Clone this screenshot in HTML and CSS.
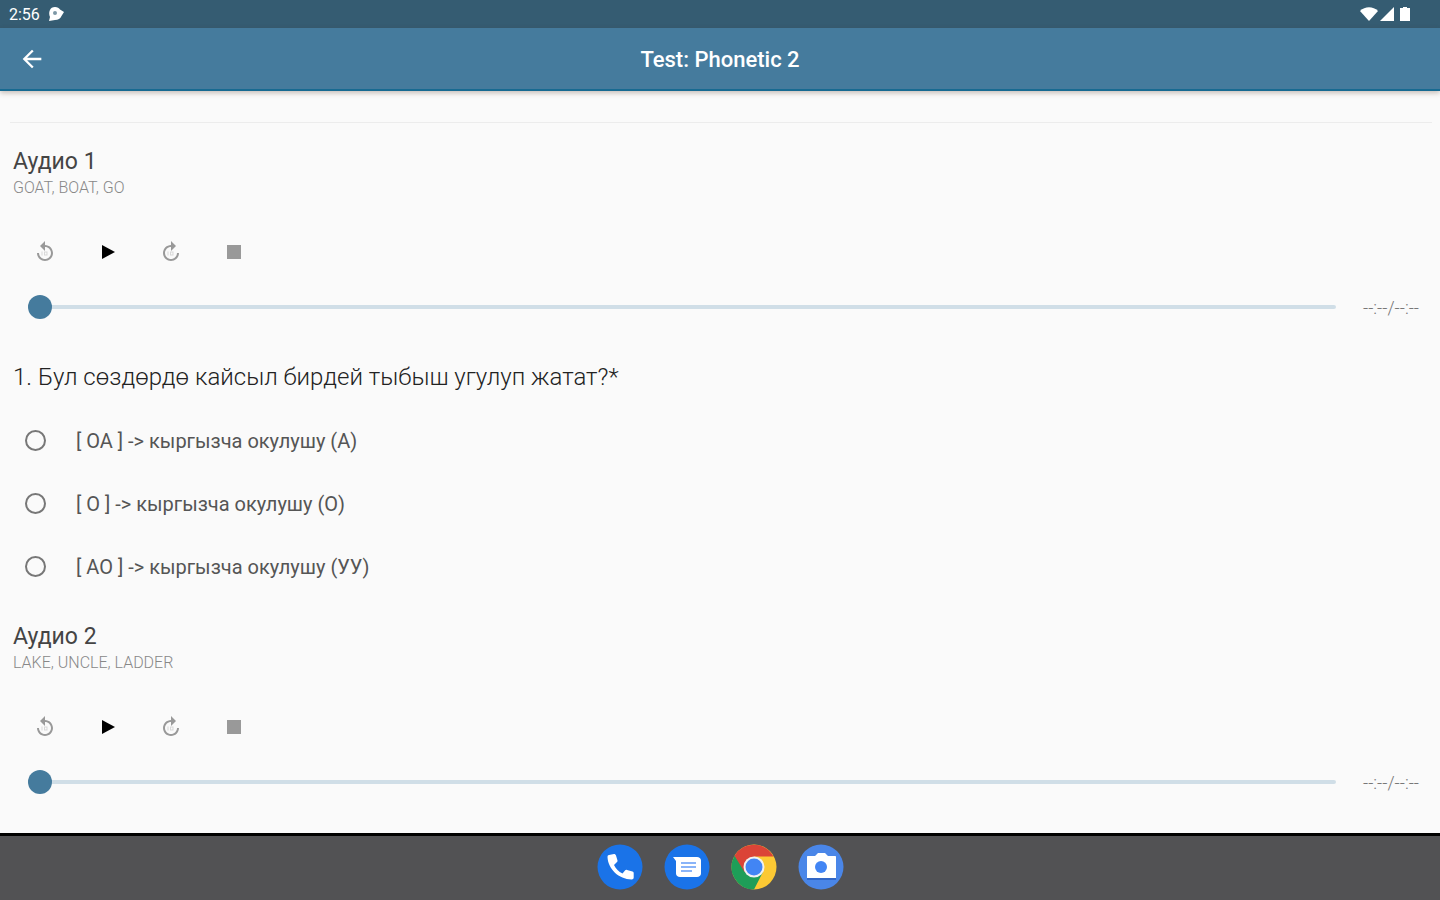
FILE: index.html
```
<!DOCTYPE html>
<html lang="ky">
<head>
    <meta charset="utf-8">
    <title>Test: Phonetic 2</title>
    <link rel="stylesheet" href="styles.css">
</head>
<body>
<svg class="sprite" aria-hidden="true">
    <symbol id="replay" viewBox="0 0 24 24">
        <path d="M12 5V1L7 6l5 5V7c3.300 0 6 2.700 6 6s-2.700 6-6 6-6-2.700-6-6H4c0 4.400 3.600 8 8 8s8-3.600 8-8-3.600-8-8-8z"/>
        <path d="M8.500 11.500h1v4h-1zM11 11.500h3.500v4H11zM12 12.500v2h1.500v-2z" opacity=".35"/>
    </symbol>
    <symbol id="forward" viewBox="0 0 24 24">
        <path d="M12 5V1l5 5-5 5V7c-3.300 0-6 2.700-6 6s2.700 6 6 6 6-2.700 6-6h2c0 4.400-3.600 8-8 8s-8-3.600-8-8 3.600-8 8-8z"/>
        <path d="M8.500 11.500h1v4h-1zM11 11.500h3.500v4H11zM12 12.500v2h1.500v-2z" opacity=".35"/>
    </symbol>
    <symbol id="play" viewBox="0 0 24 24"><path d="M6 5v14l13-7z"/></symbol>
    <symbol id="stop" viewBox="0 0 24 24"><path d="M5 5h14v14H5z"/></symbol>
</svg>
<div class="statusBar">
    <span class="clock">2:56</span>
    <svg class="notice" width="18" height="16" viewBox="0 0 18 16">
        <path fill="#fff" d="M8 1c2.500 0 4 1 5 2.500l4 2.500-2.500 4C13.500 12.500 11 14 8 14l-6 1 1-4C1 6 3 1 8 1z"/>
        <circle cx="8" cy="7" r="2" fill="#7d98a6"/>
    </svg>
    <div class="statusIcons">
        <svg width="18" height="16" viewBox="0 0 18 16"><path fill="#fff" d="M0 5C5 0 13 0 18 5L9 15z"/></svg>
        <svg width="14" height="16" viewBox="0 0 14 16"><path fill="#fff" d="M14 1v14H0z"/></svg>
        <svg class="battery" width="10" height="16" viewBox="0 0 10 16"><path fill="#fff" d="M3 1h4v1h3v13H0V2h3z"/></svg>
    </div>
</div>
<header class="appBar">
    <button class="back" type="button" aria-label="Back">
        <svg width="28" height="28" viewBox="0 0 24 24"><path fill="#fff" d="M20 11H7.800l5.600-5.600L12 4l-8 8 8 8 1.400-1.400L7.800 13H20z"/></svg>
    </button>
    <h1>Test: Phonetic 2</h1>
</header>
<main class="content">
    <hr>
    <section class="audio">
        <h2>Аудио 1</h2>
        <p class="words">GOAT, BOAT, GO</p>
        <div class="controls">
            <button type="button" aria-label="Replay"><svg><use href="#replay"/></svg></button>
            <button class="play" type="button" aria-label="Play"><svg><use href="#play"/></svg></button>
            <button type="button" aria-label="Forward"><svg><use href="#forward"/></svg></button>
            <button type="button" aria-label="Stop"><svg><use href="#stop"/></svg></button>
        </div>
        <div class="progress">
            <input type="range" min="0" max="100" value="0" aria-label="Аудио 1">
            <span>--:--/--:--</span>
        </div>
    </section>
    <fieldset class="question">
        <legend>1. Бул сөздөрдө кайсыл бирдей тыбыш угулуп жатат?*</legend>
        <label><input type="radio" name="q1"><span>[ OA ] -&gt; кыргызча окулушу (А)</span></label>
        <label><input type="radio" name="q1"><span>[ O ] -&gt; кыргызча окулушу (О)</span></label>
        <label><input type="radio" name="q1"><span>[ AO ] -&gt; кыргызча окулушу (УУ)</span></label>
    </fieldset>
    <section class="audio">
        <h2>Аудио 2</h2>
        <p class="words">LAKE, UNCLE, LADDER</p>
        <div class="controls">
            <button type="button" aria-label="Replay"><svg><use href="#replay"/></svg></button>
            <button class="play" type="button" aria-label="Play"><svg><use href="#play"/></svg></button>
            <button type="button" aria-label="Forward"><svg><use href="#forward"/></svg></button>
            <button type="button" aria-label="Stop"><svg><use href="#stop"/></svg></button>
        </div>
        <div class="progress">
            <input type="range" min="0" max="100" value="0" aria-label="Аудио 2">
            <span>--:--/--:--</span>
        </div>
    </section>
</main>
<nav class="dock">
    <button type="button" aria-label="Phone">
        <svg viewBox="0 0 46 46">
            <circle cx="23" cy="23" r="22.500" fill="#1a73e8"/>
            <path fill="#fff" d="M12 11l5-1c1 0 1.500.5 2 1.500l1.500 5c0 1-.2 1.500-1 2L17 21c2 4 4.500 6.500 8.500 8.500l2.500-3c.6-.6 1.300-.8 2-.5l5.500 1.500c.8.3 1.200.8 1.200 1.500v4.500c0 1.200-.8 1.900-2 1.900C22 35.500 11 25 10.500 13c0-1.200.5-1.800 1.500-2z"/>
        </svg>
    </button>
    <button type="button" aria-label="Messages">
        <svg viewBox="0 0 46 46">
            <circle cx="23" cy="23" r="22.500" fill="#1a73e8"/>
            <path fill="#fff" d="M9 13h24c2.200 0 4 1.500 4 3.500v13c0 2-1.800 3.500-4 3.500H16c-2.200 0-4-1.500-4-3.500V17z"/>
            <path stroke="#8ab4f8" stroke-width="2" d="M17 19h15M17 23h15M17 27h11"/>
        </svg>
    </button>
    <button type="button" aria-label="Chrome">
        <svg viewBox="0 0 46 46">
            <circle cx="23" cy="23" r="22.500" fill="#fcc934"/>
            <path fill="#1e9e58" d="M3.500 11.750A22.500 22.500 0 0 0 23 45.500L32 28 23 23z"/>
            <path fill="#db4437" d="M3.500 11.750A22.500 22.500 0 0 1 42.500 12.500H23v10.500l-9.500 5z"/>
            <circle cx="23" cy="23" r="10.500" fill="#f1f1f1"/>
            <circle cx="23" cy="23" r="8.500" fill="#4285f4"/>
        </svg>
    </button>
    <button type="button" aria-label="Camera">
        <svg viewBox="0 0 46 46">
            <circle cx="23" cy="23" r="22.500" fill="#4a86e8"/>
            <path fill="#3367c6" d="M9 33h29v3H9z"/>
            <path fill="#fff" d="M10 12h7l3-3h7l3 3h7c.6 0 1 .4 1 1v21H9V13c0-.6.4-1 1-1z"/>
            <circle cx="23" cy="23" r="6" fill="#4285f4"/>
        </svg>
    </button>
</nav>
</body>
</html>
```
FILE: styles.css
```
*{
    box-sizing: border-box;
}
body{
    margin: 0;
    height: 100vh;
    display: flex;
    flex-direction: column;
    background: #fafafa;
    color: #444;
    font-family: Roboto, "Noto Sans", sans-serif;
}
button{
    border: 0;
    padding: 0;
    background: none;
    cursor: pointer;
}
svg{
    display: block;
}
.sprite{
    display: none;
}
.statusBar{
    flex: none;
    height: 28px;
    padding: 0 30px 0 9px;
    display: flex;
    align-items: center;
    gap: 7px;
    background: #355c72;
    color: #fff;
    font-size: 16px;
}
.statusIcons{
    margin-left: auto;
    display: flex;
    gap: 2px;
}
.battery{
    margin-left: 4px;
}
.appBar{
    flex: none;
    height: 63px;
    padding: 0 18px;
    display: grid;
    grid-template-columns: 28px 1fr 28px;
    align-items: center;
    background: #457b9d;
    border-bottom: 2px solid #176a91;
    box-shadow: 0 2px 5px rgba(80,50,30,0.3);
    color: #fff;
}
.appBar h1{
    margin: 0;
    padding-top: 2px;
    text-align: center;
    font-size: 22px;
    font-weight: 500;
}
.content{
    flex: 1;
    min-height: 0;
    overflow: hidden;
}
hr{
    margin: 31px 8px 0 10px;
    border: 0;
    border-top: 1px solid #ececec;
}
.audio{
    padding: 25px 0 0 13px;
}
.audio h2{
    margin: 0;
    font-size: 23px;
    font-weight: 400;
    line-height: 28px;
}
.words{
    margin: 0;
    color: #888;
    font-size: 16px;
    font-weight: 300;
    line-height: 24px;
}
.controls{
    margin-top: 20px;
    display: flex;
}
.controls button{
    width: 63px;
    height: 64px;
    display: flex;
    align-items: center;
    justify-content: center;
    color: #999;
}
.controls .play{
    color: #000;
}
.controls svg{
    width: 24px;
    height: 24px;
    fill: currentColor;
}
.progress{
    height: 46px;
    padding: 0 21px 0 15px;
    display: flex;
    align-items: center;
    gap: 27px;
    color: #777;
    font-size: 18px;
    font-weight: 300;
}
.progress input{
    flex: 1;
    min-width: 0;
    height: 24px;
    margin: 0;
    background: none;
    appearance: none;
}
.progress input::-webkit-slider-runnable-track{
    height: 4px;
    border-radius: 2px;
    background: #d0dee7;
}
.progress input::-webkit-slider-thumb{
    width: 24px;
    height: 24px;
    margin-top: -10px;
    border-radius: 50%;
    background: #457b9d;
    appearance: none;
}
.question{
    margin: 32px 0 0;
    padding: 0 13px;
    border: 0;
}
.question legend{
    margin-bottom: 17px;
    padding: 0;
    font-size: 24px;
    font-weight: 300;
    line-height: 30px;
    color: #222;
}
.question label{
    height: 63px;
    padding-left: 12px;
    display: flex;
    align-items: center;
    gap: 30px;
    color: #555;
    font-size: 20px;
}
.question input{
    width: 21px;
    height: 21px;
    margin: 0;
    border: 2px solid #777;
    border-radius: 50%;
    appearance: none;
}
.question input:checked{
    border: 6px solid #457b9d;
}
.dock{
    flex: none;
    height: 67px;
    padding-bottom: 2px;
    border-top: 3px solid #000;
    display: flex;
    align-items: center;
    justify-content: center;
    gap: 21px;
    background: #525254;
}
.dock svg{
    width: 46px;
    height: 46px;
}
```
